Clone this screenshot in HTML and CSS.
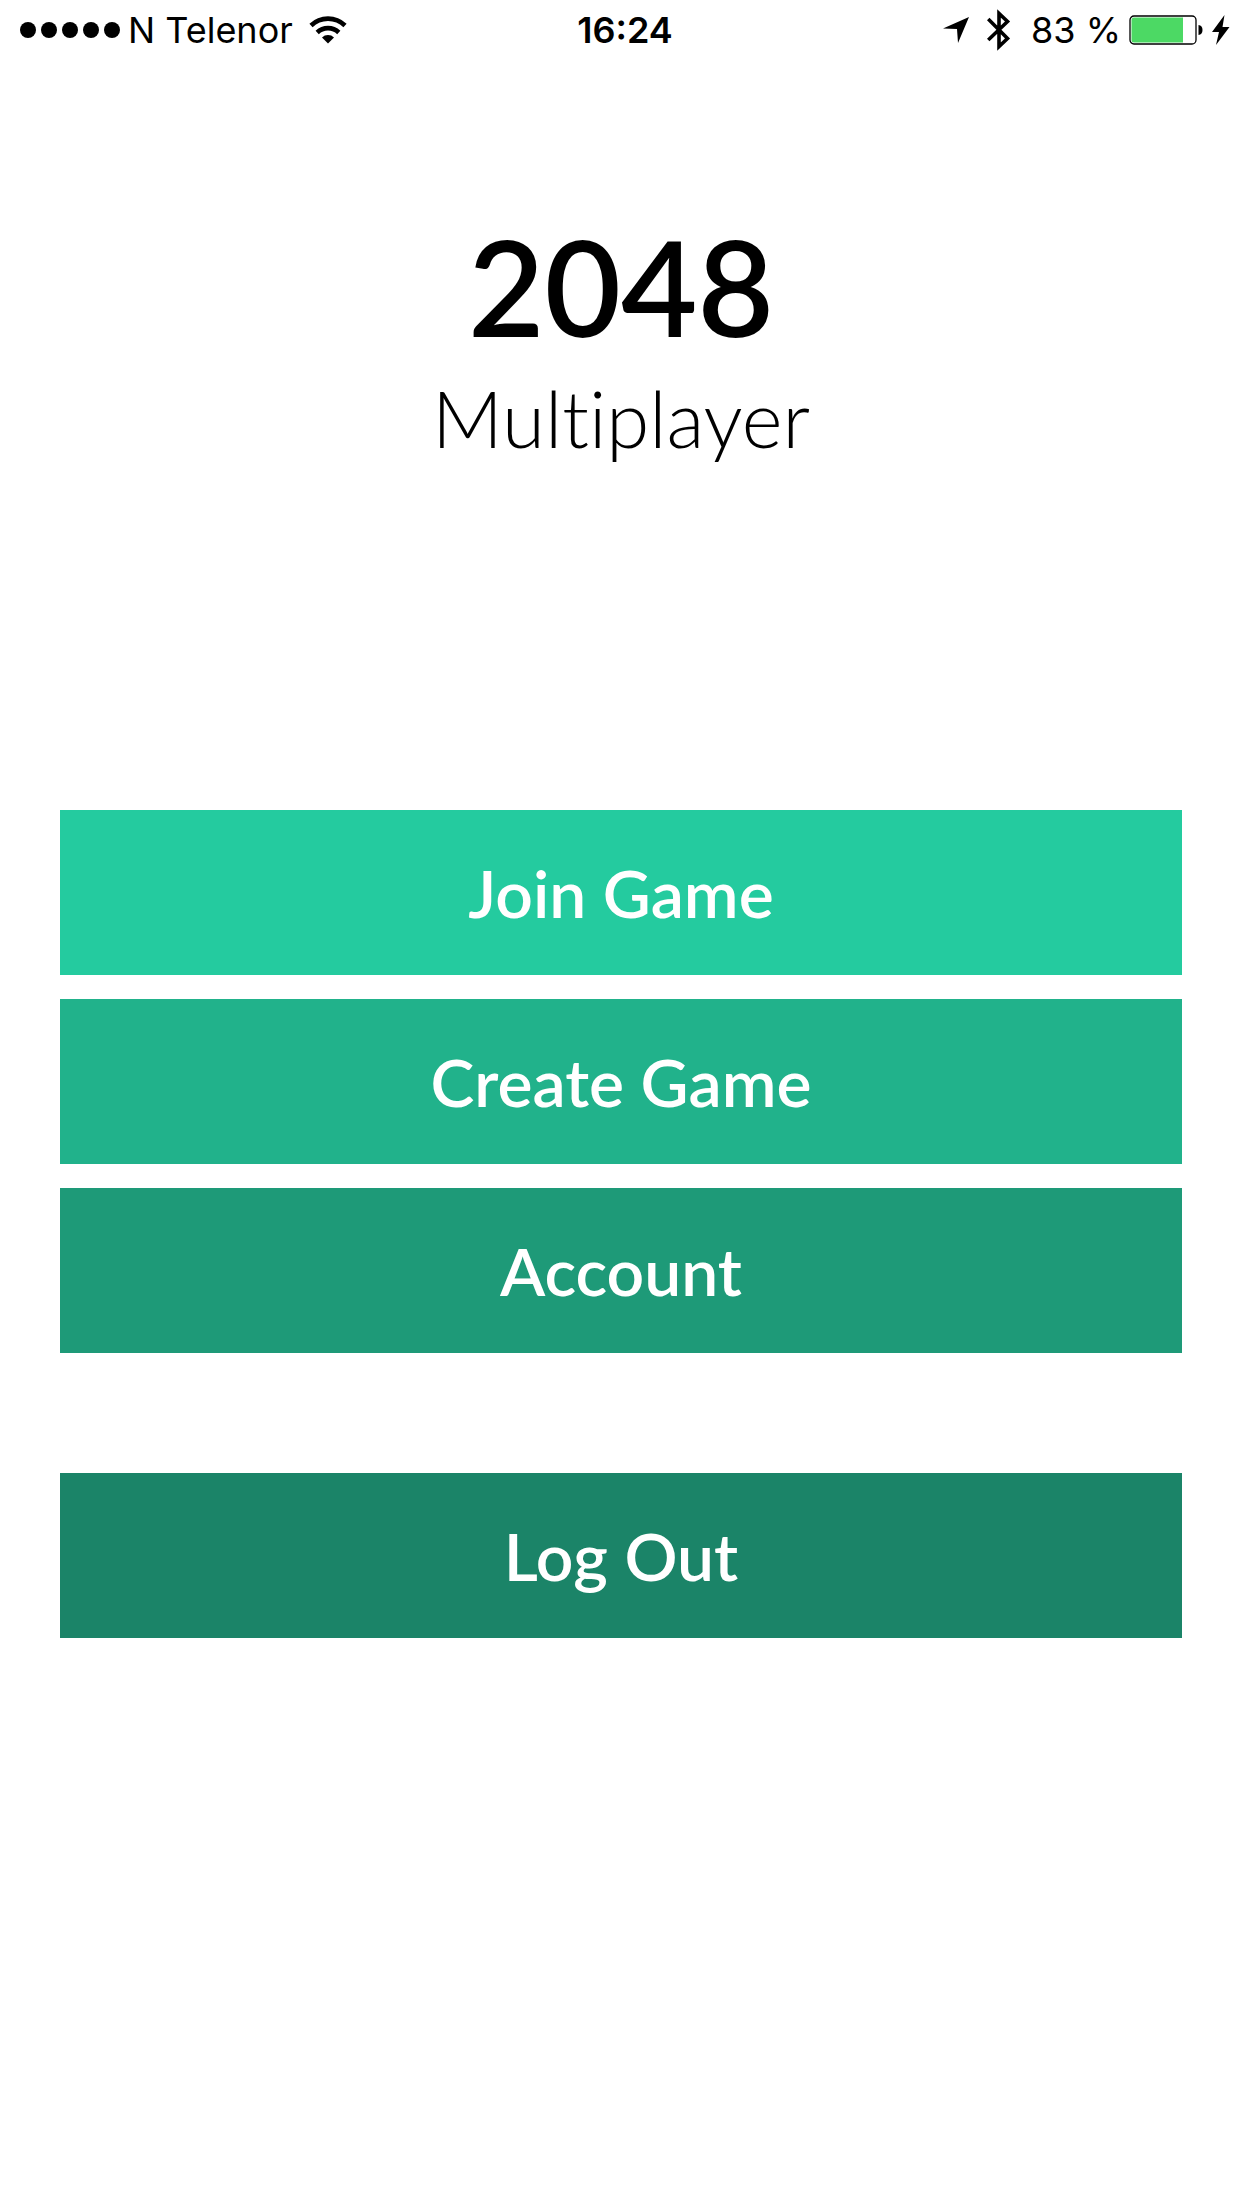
FILE: index.html
```html
<!DOCTYPE html>
<html lang="en">
<head>
<meta charset="utf-8">
<meta name="viewport" content="width=device-width, initial-scale=1">
<title>2048 Multiplayer</title>
<link rel="stylesheet" href="styles.css">
</head>
<body>
<header class="status">
  <div class="status-left">
    <svg class="signal" width="100" height="16" viewBox="0 0 100 16" role="img" aria-label="Signal strength"><circle cx="8" cy="8" r="8"/><circle cx="29" cy="8" r="8"/><circle cx="50" cy="8" r="8"/><circle cx="71" cy="8" r="8"/><circle cx="92" cy="8" r="8"/></svg>
    <span class="carrier">N Telenor</span>
    <svg class="wifi" width="38" height="28" viewBox="0 0 38 28" role="img" aria-label="Wi-Fi"><g fill="none" stroke="#000" stroke-width="4.600"><path d="M2 9.500A24.500 24.500 0 0 1 36 9.500"/><path d="M8.200 16.500A15.500 15.500 0 0 1 29.800 16.500"/></g><path d="M19 27.500L13 21.500A8.500 8.500 0 0 1 25 21.500Z"/></svg>
  </div>
  <time class="clock">16:24</time>
  <div class="status-right">
    <svg class="location" width="26" height="26" viewBox="0 0 26 26" role="img" aria-label="Location"><path d="M26 0L15 26L14 12L0 11.500Z"/></svg>
    <svg class="bluetooth" width="24" height="42" viewBox="0 0 24 42" role="img" aria-label="Bluetooth" fill="none" stroke="#000" stroke-width="3.600"><path d="M1.200 10L20.500 29.500L12 37.500V4.500L20.500 12.500L1.200 31"/></svg>
    <span class="percent">83 %</span>
    <svg class="battery" width="74" height="30" viewBox="0 0 74 30" role="img" aria-label="Battery"><rect x="1" y="1" width="66" height="28" rx="4" fill="#fff" stroke="#000" stroke-width="1.300"/><path d="M5 2.500H54V27.500H5Q2.500 27.500 2.500 25V5Q2.500 2.500 5 2.500Z" fill="#4cd964"/><path d="M69.500 10Q73.500 10.500 73.500 15T69.500 20Z"/></svg>
    <svg class="bolt" width="18" height="30" viewBox="0 0 18 30" role="img" aria-label="Charging"><path d="M12.500 0L0 17H7L4 30L17.500 12H10.500Z"/></svg>
  </div>
</header>
<main class="menu">
  <h1 class="title">2048 <span class="subtitle">Multiplayer</span></h1>
  <nav class="actions">
    <button class="action join" type="button">Join Game</button>
    <button class="action create" type="button">Create Game</button>
    <button class="action account" type="button">Account</button>
    <button class="action logout" type="button">Log Out</button>
  </nav>
</main>
</body>
</html>
```
FILE: styles.css
```css
* {
  box-sizing: border-box;
}

body {
  margin: 0;
  background: #fff;
  color: #000;
  font-family: Lato, sans-serif;
}

.status {
  display: grid;
  grid-template-columns: 1fr auto 1fr;
  align-items: center;
  height: 60px;
  padding: 0 12px 0 20px;
  font: 400 36px/60px Inter, sans-serif;
}

.status-left,
.status-right {
  display: flex;
  align-items: center;
}

.status-right {
  justify-content: flex-end;
}

.carrier {
  margin: 0 16px 0 8px;
}

.clock {
  font-weight: 600;
}

.bluetooth {
  margin: 0 20px 0 18px;
}

.battery {
  margin: 0 9px 0 8px;
}

.menu {
  padding: 148px 60px 60px;
}

.title {
  margin: 0;
  font-size: 132px;
  font-weight: 600;
  line-height: 156px;
  text-align: center;
}

.subtitle {
  display: block;
  font-size: 78px;
  font-weight: 300;
  line-height: 108px;
  font-variant-ligatures: none;
}

.actions {
  display: grid;
  gap: 24px;
  margin-top: 338px;
}

.action {
  height: 165px;
  padding: 0;
  border: 0;
  border-radius: 0;
  color: #fff;
  font: 600 66px/80px Lato, sans-serif;
}

.join {
  background: #24cb9f;
}

.create {
  background: #21b28b;
}

.account {
  background: #1e9a78;
}

.logout {
  margin-top: 96px;
  background: #1b8468;
}
```
